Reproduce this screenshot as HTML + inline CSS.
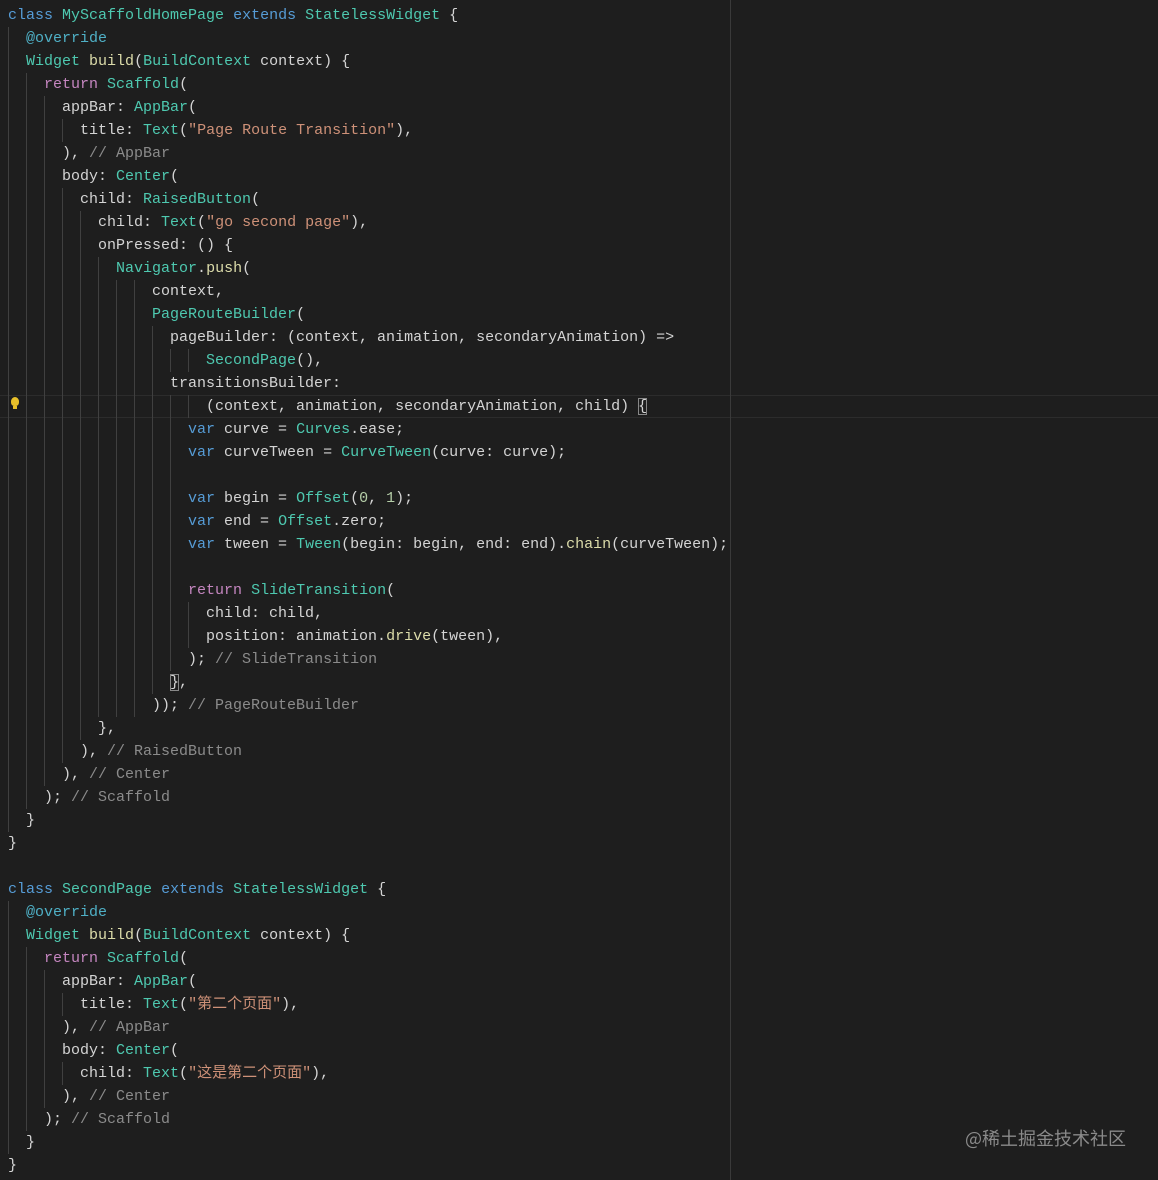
<!DOCTYPE html>
<html><head><meta charset="utf-8"><style>
html,body{margin:0;padding:0;background:#1e1e1e;width:1158px;height:1180px;overflow:hidden;}
body{position:relative;font-family:"Liberation Mono","Noto Sans CJK SC",monospace;font-size:15px;color:#d4d4d4;}
.l{position:absolute;left:0;height:23px;line-height:23px;white-space:pre;width:1158px;}
.g{position:absolute;left:8px;top:0;height:23px;background:repeating-linear-gradient(to right,#404040 0 1px,transparent 1px 18px);}
.t{position:absolute;left:8px;top:0;height:23px;line-height:23px;}
.k{color:#569cd6}.c{color:#4ec9b0}.f{color:#dcdcaa}.s{color:#ce9178}.p{color:#c586c0}.m{color:#8b8b8b}.n{color:#b5cea8}.a{color:#4fb0c6}
.cjk{font-family:"Noto Sans CJK SC",sans-serif;font-size:15px;line-height:1;vertical-align:baseline;}
.box{outline:1px solid #888;outline-offset:-1px;}
#ruler{position:absolute;left:730px;top:0;width:1px;height:1180px;background:#3a3a3a;}
#cur{position:absolute;left:0;top:395px;width:1158px;height:21px;border-top:1px solid #2c2c2c;border-bottom:1px solid #2c2c2c;}
#wm{position:absolute;left:965px;top:1125px;font-family:"Noto Sans CJK SC",sans-serif;font-size:18px;color:#8a8a8a;}
#bulb{position:absolute;left:11px;top:397px;width:8px;height:9px;background:#e8c02a;border-radius:50% 50% 40% 40%;}
#bulb:after{content:"";position:absolute;left:2px;top:9px;width:4px;height:3px;background:#e8c02a;}
</style></head><body>
<div id="cur"></div>
<div id="ruler"></div>
<div id="bulb"></div>

<div class="l" style="top:4px"><span class="t"><span class="k">class</span> <span class="c">MyScaffoldHomePage</span> <span class="k">extends</span> <span class="c">StatelessWidget</span> {</span></div>
<div class="l" style="top:27px"><span class="g" style="width:18px"></span><span class="t">  <span class="a">@override</span></span></div>
<div class="l" style="top:50px"><span class="g" style="width:18px"></span><span class="t">  <span class="c">Widget</span> <span class="f">build</span>(<span class="c">BuildContext</span> context) {</span></div>
<div class="l" style="top:73px"><span class="g" style="width:36px"></span><span class="t">    <span class="p">return</span> <span class="c">Scaffold</span>(</span></div>
<div class="l" style="top:96px"><span class="g" style="width:54px"></span><span class="t">      appBar: <span class="c">AppBar</span>(</span></div>
<div class="l" style="top:119px"><span class="g" style="width:72px"></span><span class="t">        title: <span class="c">Text</span>(<span class="s">"Page Route Transition"</span>),</span></div>
<div class="l" style="top:142px"><span class="g" style="width:54px"></span><span class="t">      ), <span class="m">// AppBar</span></span></div>
<div class="l" style="top:165px"><span class="g" style="width:54px"></span><span class="t">      body: <span class="c">Center</span>(</span></div>
<div class="l" style="top:188px"><span class="g" style="width:72px"></span><span class="t">        child: <span class="c">RaisedButton</span>(</span></div>
<div class="l" style="top:211px"><span class="g" style="width:90px"></span><span class="t">          child: <span class="c">Text</span>(<span class="s">"go second page"</span>),</span></div>
<div class="l" style="top:234px"><span class="g" style="width:90px"></span><span class="t">          onPressed: () {</span></div>
<div class="l" style="top:257px"><span class="g" style="width:108px"></span><span class="t">            <span class="c">Navigator</span>.<span class="f">push</span>(</span></div>
<div class="l" style="top:280px"><span class="g" style="width:144px"></span><span class="t">                context,</span></div>
<div class="l" style="top:303px"><span class="g" style="width:144px"></span><span class="t">                <span class="c">PageRouteBuilder</span>(</span></div>
<div class="l" style="top:326px"><span class="g" style="width:162px"></span><span class="t">                  pageBuilder: (context, animation, secondaryAnimation) =&gt;</span></div>
<div class="l" style="top:349px"><span class="g" style="width:198px"></span><span class="t">                      <span class="c">SecondPage</span>(),</span></div>
<div class="l" style="top:372px"><span class="g" style="width:162px"></span><span class="t">                  transitionsBuilder:</span></div>
<div class="l" style="top:395px"><span class="g" style="width:198px"></span><span class="t">                      (context, animation, secondaryAnimation, child) <span class="box">{</span></span></div>
<div class="l" style="top:418px"><span class="g" style="width:180px"></span><span class="t">                    <span class="k">var</span> curve = <span class="c">Curves</span>.ease;</span></div>
<div class="l" style="top:441px"><span class="g" style="width:180px"></span><span class="t">                    <span class="k">var</span> curveTween = <span class="c">CurveTween</span>(curve: curve);</span></div>
<div class="l" style="top:464px"><span class="g" style="width:180px"></span></div>
<div class="l" style="top:487px"><span class="g" style="width:180px"></span><span class="t">                    <span class="k">var</span> begin = <span class="c">Offset</span>(<span class="n">0</span>, <span class="n">1</span>);</span></div>
<div class="l" style="top:510px"><span class="g" style="width:180px"></span><span class="t">                    <span class="k">var</span> end = <span class="c">Offset</span>.zero;</span></div>
<div class="l" style="top:533px"><span class="g" style="width:180px"></span><span class="t">                    <span class="k">var</span> tween = <span class="c">Tween</span>(begin: begin, end: end).<span class="f">chain</span>(curveTween);</span></div>
<div class="l" style="top:556px"><span class="g" style="width:180px"></span></div>
<div class="l" style="top:579px"><span class="g" style="width:180px"></span><span class="t">                    <span class="p">return</span> <span class="c">SlideTransition</span>(</span></div>
<div class="l" style="top:602px"><span class="g" style="width:198px"></span><span class="t">                      child: child,</span></div>
<div class="l" style="top:625px"><span class="g" style="width:198px"></span><span class="t">                      position: animation.<span class="f">drive</span>(tween),</span></div>
<div class="l" style="top:648px"><span class="g" style="width:180px"></span><span class="t">                    ); <span class="m">// SlideTransition</span></span></div>
<div class="l" style="top:671px"><span class="g" style="width:162px"></span><span class="t">                  <span class="box">}</span>,</span></div>
<div class="l" style="top:694px"><span class="g" style="width:144px"></span><span class="t">                )); <span class="m">// PageRouteBuilder</span></span></div>
<div class="l" style="top:717px"><span class="g" style="width:90px"></span><span class="t">          },</span></div>
<div class="l" style="top:740px"><span class="g" style="width:72px"></span><span class="t">        ), <span class="m">// RaisedButton</span></span></div>
<div class="l" style="top:763px"><span class="g" style="width:54px"></span><span class="t">      ), <span class="m">// Center</span></span></div>
<div class="l" style="top:786px"><span class="g" style="width:36px"></span><span class="t">    ); <span class="m">// Scaffold</span></span></div>
<div class="l" style="top:809px"><span class="g" style="width:18px"></span><span class="t">  }</span></div>
<div class="l" style="top:832px"><span class="t">}</span></div>

<div class="l" style="top:878px"><span class="t"><span class="k">class</span> <span class="c">SecondPage</span> <span class="k">extends</span> <span class="c">StatelessWidget</span> {</span></div>
<div class="l" style="top:901px"><span class="g" style="width:18px"></span><span class="t">  <span class="a">@override</span></span></div>
<div class="l" style="top:924px"><span class="g" style="width:18px"></span><span class="t">  <span class="c">Widget</span> <span class="f">build</span>(<span class="c">BuildContext</span> context) {</span></div>
<div class="l" style="top:947px"><span class="g" style="width:36px"></span><span class="t">    <span class="p">return</span> <span class="c">Scaffold</span>(</span></div>
<div class="l" style="top:970px"><span class="g" style="width:54px"></span><span class="t">      appBar: <span class="c">AppBar</span>(</span></div>
<div class="l" style="top:993px"><span class="g" style="width:72px"></span><span class="t">        title: <span class="c">Text</span>(<span class="s">"<span class="cjk">第二个页面</span>"</span>),</span></div>
<div class="l" style="top:1016px"><span class="g" style="width:54px"></span><span class="t">      ), <span class="m">// AppBar</span></span></div>
<div class="l" style="top:1039px"><span class="g" style="width:54px"></span><span class="t">      body: <span class="c">Center</span>(</span></div>
<div class="l" style="top:1062px"><span class="g" style="width:72px"></span><span class="t">        child: <span class="c">Text</span>(<span class="s">"<span class="cjk">这是第二个页面</span>"</span>),</span></div>
<div class="l" style="top:1085px"><span class="g" style="width:54px"></span><span class="t">      ), <span class="m">// Center</span></span></div>
<div class="l" style="top:1108px"><span class="g" style="width:36px"></span><span class="t">    ); <span class="m">// Scaffold</span></span></div>
<div class="l" style="top:1131px"><span class="g" style="width:18px"></span><span class="t">  }</span></div>
<div class="l" style="top:1154px"><span class="t">}</span></div>

<div id="wm">@稀土掘金技术社区</div>
</body></html>
